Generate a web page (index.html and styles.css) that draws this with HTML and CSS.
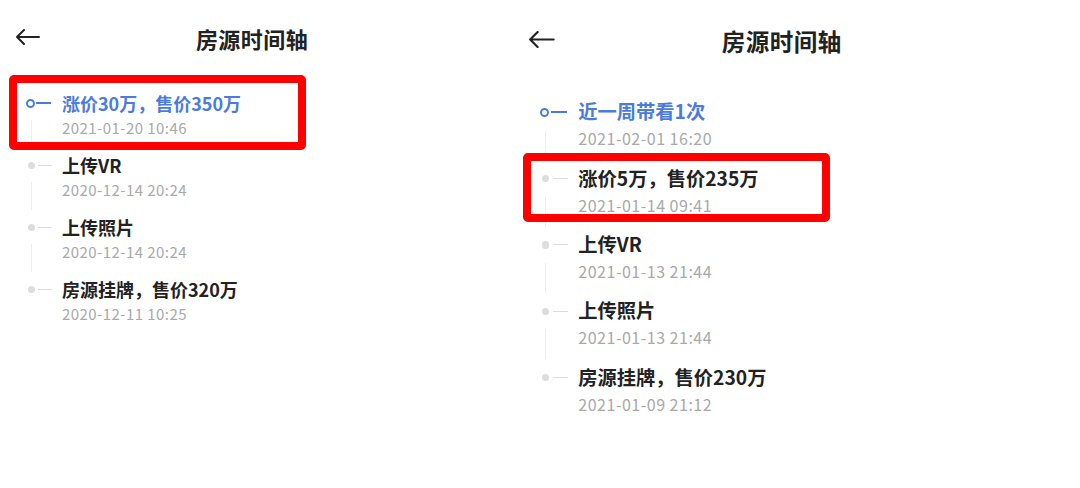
FILE: index.html
```html
<!DOCTYPE html>
<html lang="zh-CN">
<head>
  <meta charset="UTF-8">
  <meta name="viewport" content="width=device-width, initial-scale=1.0">
  <title>房源时间轴</title>
  <link rel="stylesheet" href="styles.css">
</head>
<body>
  <div class="shots">
    <!-- 左图 -->
    <div class="panel">
      <div class="header">
        <span class="back">
          <svg width="25" height="16" viewBox="0 0 25 16"><path d="M24 8H2M9 1L2 8l7 7" fill="none" stroke="#222" stroke-width="2" stroke-linecap="round" stroke-linejoin="round"/></svg>
        </span>
        <span class="title">房源时间轴</span>
      </div>
      <div class="timeline">
        <div class="item active mark-a">
          <div class="mark"><div class="node"><i class="dot"></i><i class="dash"></i></div><div class="rail"></div></div>
          <div class="body"><div class="name">涨价30万，售价350万</div><div class="time">2021-01-20 10:46</div></div>
        </div>
        <div class="item">
          <div class="mark"><div class="node"><i class="dot"></i><i class="dash"></i></div><div class="rail"></div></div>
          <div class="body"><div class="name">上传VR</div><div class="time">2020-12-14 20:24</div></div>
        </div>
        <div class="item">
          <div class="mark"><div class="node"><i class="dot"></i><i class="dash"></i></div><div class="rail"></div></div>
          <div class="body"><div class="name">上传照片</div><div class="time">2020-12-14 20:24</div></div>
        </div>
        <div class="item last">
          <div class="mark"><div class="node"><i class="dot"></i><i class="dash"></i></div><div class="rail"></div></div>
          <div class="body"><div class="name">房源挂牌，售价320万</div><div class="time">2020-12-11 10:25</div></div>
        </div>
      </div>
    </div>

    <!-- 右图 -->
    <div class="panel panel-wide">
      <div class="header">
        <span class="back">
          <svg width="100%" viewBox="0 0 25 16"><path d="M24 8H2M9 1L2 8l7 7" fill="none" stroke="#222" stroke-width="2" stroke-linecap="round" stroke-linejoin="round"/></svg>
        </span>
        <span class="title">房源时间轴</span>
      </div>
      <div class="timeline">
        <div class="item active">
          <div class="mark"><div class="node"><i class="dot"></i><i class="dash"></i></div><div class="rail"></div></div>
          <div class="body"><div class="name">近一周带看1次</div><div class="time">2021-02-01 16:20</div></div>
        </div>
        <div class="item mark-b">
          <div class="mark"><div class="node"><i class="dot"></i><i class="dash"></i></div><div class="rail"></div></div>
          <div class="body"><div class="name">涨价5万，售价235万</div><div class="time">2021-01-14 09:41</div></div>
        </div>
        <div class="item">
          <div class="mark"><div class="node"><i class="dot"></i><i class="dash"></i></div><div class="rail"></div></div>
          <div class="body"><div class="name">上传VR</div><div class="time">2021-01-13 21:44</div></div>
        </div>
        <div class="item">
          <div class="mark"><div class="node"><i class="dot"></i><i class="dash"></i></div><div class="rail"></div></div>
          <div class="body"><div class="name">上传照片</div><div class="time">2021-01-13 21:44</div></div>
        </div>
        <div class="item last">
          <div class="mark"><div class="node"><i class="dot"></i><i class="dash"></i></div><div class="rail"></div></div>
          <div class="body"><div class="name">房源挂牌，售价230万</div><div class="time">2021-01-09 21:12</div></div>
        </div>
      </div>
    </div>
  </div>
</body>
</html>
```

FILE: styles.css
```css
body { margin: 0; background: #fff; font-family: "Noto Sans CJK SC", "Noto Sans", sans-serif; color: #222; }
.shots { display: flex; gap: 8px; align-items: flex-start; }

.panel { font-size: 16px; width: 31.5em; flex: none; }
.panel-wide { font-size: 17.12px; }

.header { display: grid; grid-template-columns: 1fr auto 1fr; align-items: center; height: 4.75em; }
.back { display: flex; padding-left: 0.9375em; width: 1.5625em; margin-top: -0.125em; }
.back svg { width: 1.5625em; height: 1em; }
.title { font-size: 1.375em; font-weight: 600; letter-spacing: 0.02em; }

.timeline { padding-top: 0.875em; }
.panel-wide .timeline { padding-top: 1em; }

.item { display: flex; position: relative; padding-bottom: 0.75em; }
.mark { width: 3.875em; flex: none; display: flex; flex-direction: column; padding-left: 1.6875em; box-sizing: border-box; }
.node { display: flex; align-items: center; height: 1.625em; }
.dot { display: block; width: 0.4375em; height: 0.4375em; border-radius: 50%; background: #ddd; margin-left: 0.0625em; flex: none; }
.dash { display: block; width: 0.875em; height: 1px; background: #ddd; margin-left: 0.1875em; }
.rail { flex: 1; width: 1px; background: #eee; margin: 0.25em 0 -0.5em 0.25em; }
.last .rail { visibility: hidden; }

.active .dot { width: 0.5625em; height: 0.5625em; margin-left: -0.0625em; box-sizing: border-box; border: 2px solid #4a7be0; background: #fff; }
.active .dash { background: #4a7be0; height: 2px; width: 0.9375em; margin-left: 0.0625em; }
.active .name { color: #4a7be0; }

.name { font-size: 1.125em; line-height: 1.4444em; font-weight: 600; }
.time { font-size: 0.9375em; line-height: 1.6em; color: #a9a9a9; letter-spacing: 0.03em; }

/* 截图上的红框标注 */
.mark-a::after, .mark-b::after { content: ""; position: absolute; border: 8px solid #ff0000; border-radius: 5px; }
.mark-a::after { left: 9px; width: 281px; top: -15px; bottom: 2px; }
.mark-b::after { left: 11px; width: 291px; top: -12px; bottom: 9px; }
```
